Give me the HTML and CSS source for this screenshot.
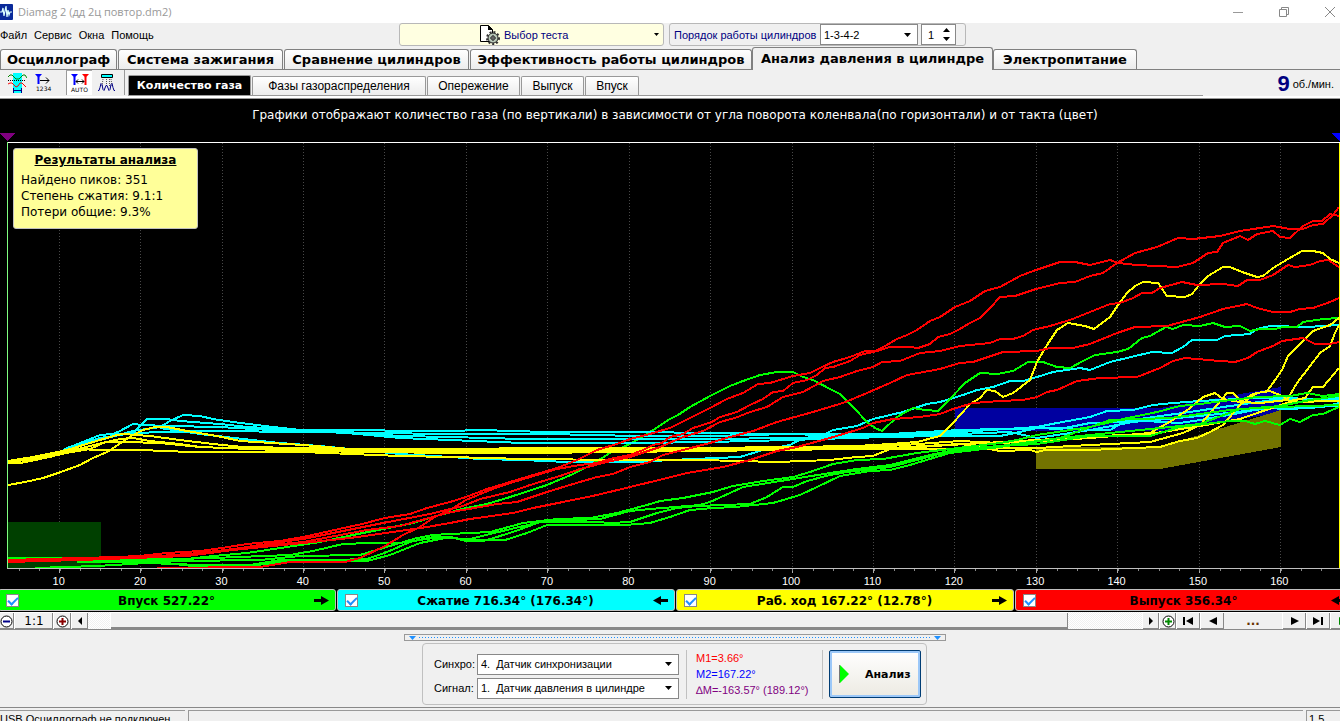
FILE: index.html
```html
<!DOCTYPE html>
<html lang="ru">
<head>
<meta charset="utf-8">
<title>Diamag 2 (дд 2ц повтор.dm2)</title>
<link rel="stylesheet" href="styles.css">
</head>
<body>
<header class="titlebar">
  <svg class="app-icon" width="13" height="16" viewBox="0 0 13 16"><rect x="-3" width="16" height="16" rx="1" fill="#0a2a9a"/><path d="M0 8h2l1-4 1 8 2-10 1 11 1-7 1 5 1-3h2" fill="none" stroke="#dff" stroke-width="1.2"/></svg>
  <span class="window-title">Diamag 2 (дд 2ц повтор.dm2)</span>
  <div class="window-buttons">
    <button aria-label="Свернуть"><svg width="12" height="12"><path d="M1 6.500h10" stroke="#999"/></svg></button>
    <button aria-label="Развернуть"><svg width="12" height="12" fill="none" stroke="#888"><path d="M1.500 3.500h7v7h-7zM3.500 3.500v-2h7v7h-2"/></svg></button>
    <button aria-label="Закрыть"><svg width="12" height="12"><path d="M1 1l10 10M11 1L1 11" stroke="#888"/></svg></button>
  </div>
</header>

<div class="menubar">
  <nav class="menu"><a href="#">Файл</a><a href="#">Сервис</a><a href="#">Окна</a><a href="#">Помощь</a></nav>
  <button class="test-picker">
    <svg width="22" height="22" viewBox="0 0 22 22"><path d="M1.500 1.500h8l4 4v12h-12z" fill="#fff" stroke="#000"/><path d="M9 1v5h5z"/><circle cx="14" cy="14" r="5" fill="#b8c8b8" stroke="#222" stroke-width="1"/><circle cx="14" cy="14" r="6" fill="none" stroke="#333" stroke-width="2" stroke-dasharray="2 2"/><circle cx="14" cy="14" r="2" fill="#fff" stroke="#333"/><path d="M14 11v6M11 14h6" stroke="#333"/></svg>
    <span>Выбор теста</span>
    <svg class="end" width="5" height="3"><path d="M0 0h5L2.500 3z"/></svg>
  </button>
  <div class="order-box">
    <label for="order">Порядок работы цилиндров</label>
    <span class="combo order-combo"><select id="order"><option>1-3-4-2</option></select><svg width="7" height="4"><path d="M0 0h7L3.500 4z"/></svg></span>
    <span class="spin"><input type="text" value="1" aria-label="Цилиндр"><svg width="7" height="13"><path d="M0 4h7L3.500 0zM0 9h7L3.500 13z"/></svg></span>
  </div>
</div>

<nav class="tabs">
  <button class="t1">Осциллограф</button><button class="t2">Система зажигания</button><button class="t3">Сравнение цилиндров</button><button class="t4">Эффективность работы цилиндров</button><button class="t5 active">Анализ давления в цилиндре</button><button class="t6">Электропитание</button>
</nav>

<div class="toolbar">
  <div class="tools">
    <button aria-label="Интервал"><svg width="20" height="20" viewBox="0 0 20 20"><path d="M6 0h9v20H6z" fill="#0ff"/><path d="M1 4l2-2h2l2 2 2 2h3l2-2 2-2h2l2 3" fill="none" stroke="#080"/><path d="M1 7.500h18" stroke="#000" stroke-dasharray="1 1"/><path d="M1 11l2-1h2l2 2 2 2 2-1 2-3h2l2 2 2 2" fill="none" stroke="red"/><path d="M7 17.500h7M6.500 15v5M14.500 15v5" stroke="#008"/></svg></button>
    <button aria-label="Нумерация"><svg width="20" height="20" viewBox="0 0 20 20"><path d="M1 1h7L4.500 5z" fill="#00f"/><path d="M4.500 4v7" stroke="#00f" stroke-width="2"/><path d="M6 7.500h9M12 4.500l3 3-3 3" fill="none" stroke="#000"/><text x="2" y="18" class="tiny">1234</text></svg></button>
    <button class="pressed" aria-label="Авто"><svg width="20" height="20" viewBox="0 0 20 20"><path d="M1 1h7L4.500 5z" fill="#00f"/><path d="M4.500 4v8" stroke="#00f" stroke-width="2"/><path d="M12 1h7l-3.500 4z" fill="red"/><path d="M15.500 4v8" stroke="red" stroke-width="2"/><path d="M6 8.500h8M8 6.500l-2 2 2 2M12 6.500l2 2-2 2" fill="none" stroke="#000"/><text x="1" y="19" class="tiny">AUTO</text></svg></button>
    <button aria-label="Пики"><svg width="20" height="20" viewBox="0 0 20 20"><path d="M4.500 1.500h11v3h-11z" fill="#0ff" stroke="#000"/><path d="M6 6l-1 7M9.500 6v7M12.500 6v7M14 6l1 7" stroke="#555" stroke-dasharray="1 1"/><path d="M1 17.500h1l1-3 1-4 1 1 1 5 1 1 2-5h1l2 5 1-1 1-5 1-1 1 4 1 3h1" fill="none" stroke="#008"/></svg></button>
  </div>
  <nav class="subtabs">
    <button class="s1 active">Количество газа</button><button class="s2">Фазы газораспределения</button><button class="s3">Опережение</button><button class="s4">Выпуск</button><button class="s5">Впуск</button>
  </nav>
  <div class="rpm"><b>9</b><span>об./мин.</span></div>
</div>

<main class="chart">
  <h1>Графики отображают количество газа (по вертикали) в зависимости от угла поворота коленвала(по горизонтали) и от такта (цвет)</h1>
  <div class="plot">
    <svg class="curves" viewBox="0 130 1340 445" preserveAspectRatio="none">
      <path d="M0 133h15l-8 8z" fill="#800080"/><path d="M1331 133h9v8z" fill="#00f"/>
      <path class="grid" d="M59.500 143v425M140.500 143v425M222.500 143v425M303.500 143v425M384.500 143v425M466.500 143v425M547.500 143v425M629.500 143v425M710.500 143v425M792.500 143v425M873.500 143v425M954.500 143v425M1036.500 143v425M1117.500 143v425M1199.500 143v425M1280.500 143v425"/>
      <path d="M8 522h93v46H8z" fill="#004000"/>
      <path d="M955 408h205l121-21v26l-121 18H955z" fill="#0000a0"/>
      <path d="M1036 447h124l121-37v37l-121 22h-124z" fill="#737300"/>
      <g class="c">
        <polyline points="160,428 200,434 243,439 280,443 320,446 400,454 450,457 480,459 523,460 567,462 637,462 670,460 717,458 740,457 763,450 790,445 803,438 822,436 833,430 857,426 873,419 903,412 927,404 940,402 963,395 977,390 993,387 1010,381 1023,381 1037,377 1053,372 1080,368 1090,370 1110,362 1152,352 1172,353 1183,347 1192,340 1217,340 1225,336 1250,334 1257,329 1270,326 1307,327 1339,325"/>
      </g>
      <g class="g">
        <polyline points="8,558 77,558 110,559 187,559 213,556 247,553 287,547 320,542 353,535 383,529 413,523 440,515 462,509 487,504 507,498 547,485 573,474 587,467 602,458 610,453 630,444 650,432 670,419 678,415 690,407 710,396 730,386 743,381 760,375 777,372 793,372 803,377 813,380 830,389 840,394 853,407 867,422 875,428 882,431 897,417 913,408 925,410 938,411 950,399 965,383 980,373 997,374 1013,371 1028,362 1043,362 1057,367 1070,368 1083,361 1095,355 1117,352 1128,349 1142,338 1150,336 1166,327 1173,329 1183,325 1200,326 1213,323 1225,327 1240,326 1250,331 1260,329 1275,329 1283,327 1297,327 1303,322 1323,319 1339,318"/>
      </g>
      <g class="c">
        <polyline points="66,449 100,438 133,433 147,419 167,419 180,421 220,424 247,427 287,429 347,433 400,438 450,440 523,443 637,443 710,442 790,440 850,438 890,437 940,436 1000,436 1020,432 1037,428 1060,429 1090,423 1120,422 1153,417 1190,412 1223,407 1273,400 1339,398"/>
        <polyline points="66,448 100,440 133,431 160,427 170,421 183,415 200,416 213,419 233,422 273,427 300,430 347,432 400,436 450,437 523,439 630,439 710,439 790,438 890,436 960,432 1037,427 1057,423 1090,417 1107,411 1133,410 1153,405 1173,403 1200,401 1257,398 1339,399"/>
        <polyline points="63,450 100,435 113,434 120,431 133,424 143,425 167,426 220,427 270,430 320,430 450,431 480,430 547,432 637,432 710,433 790,434 890,434 960,430 1000,429 1060,428 1090,430 1110,430 1127,420 1180,423 1200,420 1240,413 1263,408 1290,409 1323,407 1339,403"/>
        <polyline points="66,449 100,440 118,434 160,432 220,431 450,434 547,434 637,436 710,436 790,434 850,436 890,435 960,434 1010,432 1037,438 1090,430 1133,422 1200,416 1273,408 1339,406"/>
      </g>
      <g class="y">
        <polyline points="8,485 25,482 43,478 58,473 80,465 93,458 107,452 115,447 125,440 133,435 143,430 155,427 167,427 187,431 217,436 240,441 303,445 350,449 450,449 550,448 700,448 790,447 857,446 890,444 917,442 940,436 953,423 970,404 980,398 987,390 995,391 1003,397 1013,393 1030,380 1037,362 1047,345 1057,330 1068,323 1085,326 1094,329 1110,317 1118,305 1127,293 1135,286 1143,282 1158,283 1167,296 1185,297 1192,294 1200,284 1208,276 1223,267 1230,267 1242,272 1257,277 1263,276 1273,268 1288,259 1302,251 1313,251 1323,253 1330,259 1339,263"/>
        <polyline points="8,461 33,457 67,450 93,442 117,435 123,434 150,436 180,440 213,444 243,447 303,448 450,450 620,450 750,449 850,446 890,446 960,441 1000,443 1060,440 1090,438 1150,433 1173,420 1190,408 1203,397 1215,393 1223,399 1240,402 1253,394 1267,391 1273,383 1282,370 1288,356 1297,347 1313,331 1330,325 1339,318"/>
        <polyline points="8,462 33,459 67,452 90,446 107,442 120,439 133,438 150,441 180,444 200,447 250,449 350,450 450,452 620,451 790,448 890,448 960,444 995,448 1037,448 1090,445 1150,442 1183,433 1200,425 1217,405 1227,393 1233,393 1242,402 1260,403 1287,400 1297,383 1320,353 1330,346 1335,333 1339,325"/>
        <polyline points="8,463 20,463 40,459 66,453 90,449 105,442 125,442 160,443 200,447 303,451 450,453 530,453 700,451 850,449 990,449 1000,451 1030,450 1037,452 1045,450 1090,450 1133,448 1160,447 1180,441 1197,438 1210,432 1223,425 1240,405 1257,393 1270,391 1282,396 1290,401 1305,398 1313,387 1323,387 1339,368"/>
        <polyline points="8,462 50,457 77,449 100,450 140,450 190,452 303,452 400,456 450,457 525,459 620,460 700,460 777,462 830,460 857,457 873,456 890,449 950,445 1037,440 1100,436 1150,434 1200,426 1240,419 1260,412 1290,402 1339,401"/>
      </g>
      <g class="g">
        <polyline points="8,559 140,560 213,558 290,555 313,551 343,544 370,543 400,543 417,538 433,535 450,534 490,532 523,523 557,519 590,518 617,513 647,505 660,501 683,498 713,492 733,486 763,481 793,477 810,472 833,464 857,460 883,459 917,453 950,449 1000,443 1017,440 1037,435 1057,432 1090,427 1123,419 1157,412 1180,406 1200,404 1223,401 1257,397 1290,396 1307,393 1323,396 1339,394"/>
        <polyline points="8,560 180,561 260,560 300,556 360,555 400,543 433,538 450,537 466,540 490,534 515,528 545,521 575,520 600,519 630,511 650,509 700,505 710,502 730,493 743,487 793,479 830,473 857,469 890,465 930,455 960,449 1000,446 1037,444 1090,436 1150,436 1180,427 1230,421 1245,421 1255,424 1265,421 1280,425 1290,419 1300,422 1313,415 1323,414 1339,407"/>
        <polyline points="35,568 97,566 147,563 200,565 250,565 280,560 333,560 367,559 387,552 410,542 433,537 463,539 487,540 513,532 540,522 597,522 610,523 630,522 657,513 677,508 697,506 750,504 767,497 783,487 793,487 807,481 830,475 847,472 890,467 917,460 950,451 1000,446 1060,438 1110,433 1160,428 1200,424 1240,409 1280,407 1339,405"/>
        <polyline points="77,562 167,563 200,567 240,567 290,561 367,561 390,555 420,543 450,537 466,541 505,540 527,533 547,525 597,525 625,525 650,523 670,517 690,510 713,508 735,507 773,503 800,495 817,487 840,476 870,471 890,470 910,465 950,453 1000,447 1060,438 1110,420 1170,418 1230,410 1280,406 1310,400 1339,396"/>
      </g>
      <g class="r">
        <polyline points="8,560 117,557 140,556 167,553 200,551 222,548 247,544 280,541 303,537 330,531 362,524 385,518 410,514 427,508 450,502 466,497 487,489 510,482 530,476 557,468 577,460 597,450 617,444 630,439 650,434 670,428 690,418 710,408 727,399 743,393 758,384 770,383 793,376 810,373 820,368 833,362 850,357 865,351 875,351 885,346 897,339 907,335 917,330 930,321 940,317 955,307 970,301 985,291 1000,287 1020,276 1036,270 1060,262 1075,262 1090,265 1110,260 1118,263 1137,265 1177,267 1193,263 1208,253 1217,252 1223,243 1240,236 1248,240 1257,234 1273,231 1280,237 1290,238 1303,226 1313,221 1322,221 1330,214 1339,216"/>
        <polyline points="157,568 260,567 290,562 345,562 360,558 385,546 403,535 420,527 433,518 450,510 466,500 490,490 510,483 557,469 580,465 597,463 610,459 630,455 643,450 653,445 662,443 670,437 683,434 693,428 712,422 720,417 737,412 750,405 763,399 773,392 783,391 793,383 807,380 817,375 825,368 833,367 850,361 860,355 877,351 890,347 910,347 918,348 930,344 938,337 950,334 958,330 970,323 980,318 990,308 1000,297 1015,296 1036,289 1060,283 1075,282 1090,276 1103,273 1117,263 1135,253 1157,247 1178,238 1193,239 1220,236 1240,231 1273,226 1290,229 1303,229 1313,225 1323,224 1333,215 1339,207"/>
        <polyline points="8,560 117,558 180,556 222,551 253,546 303,539 333,533 383,523 430,514 463,506 480,499 510,492 530,485 560,476 580,469 607,462 630,457 660,447 683,437 703,431 720,422 735,418 750,412 767,407 783,397 803,392 823,381 840,377 857,371 873,367 882,362 900,361 920,353 940,351 960,346 990,343 1000,339 1013,339 1023,336 1033,330 1050,326 1070,320 1090,312 1110,304 1120,303 1133,298 1142,293 1152,293 1160,288 1182,282 1197,285 1223,284 1238,286 1247,280 1260,280 1273,275 1288,265 1295,267 1310,265 1320,261 1328,260 1339,267"/>
        <polyline points="8,561 133,558 200,553 250,547 303,542 367,530 400,526 447,513 463,510 497,504 517,502 547,492 573,484 597,477 613,474 630,467 650,462 663,455 683,450 710,443 730,437 753,431 777,422 813,412 843,403 867,393 890,383 907,375 940,369 960,363 973,362 1003,352 1037,351 1050,348 1073,348 1090,344 1117,333 1135,327 1167,326 1200,317 1223,309 1247,304 1257,308 1273,312 1290,312 1300,309 1313,308 1330,302 1339,298"/>
        <polyline points="8,562 80,560 187,556 233,550 303,543 350,538 400,531 427,527 450,523 470,519 513,513 533,508 563,502 597,495 630,487 663,479 687,473 723,467 750,460 777,451 797,447 830,438 863,428 873,423 893,419 920,417 940,414 953,409 973,403 1000,401 1023,400 1037,397 1047,392 1057,390 1077,381 1100,378 1137,377 1160,368 1173,361 1185,358 1220,361 1235,362 1248,358 1257,352 1273,346 1282,341 1303,338 1315,344 1330,344 1339,342"/>
      </g>
      <path class="frame" d="M7 142.500h1333"/>
      <path d="M7.500 142v427" stroke="#80ff80"/><path d="M1339.500 143v426" stroke="#ff0"/>
      <path d="M7 568.500h1333" stroke="#c0c0c0"/>
      <path d="M59.500 569v4M140.500 569v4M222.500 569v4M303.500 569v4M384.500 569v4M466.500 569v4M547.500 569v4M629.500 569v4M710.500 569v4M792.500 569v4M873.500 569v4M954.500 569v4M1036.500 569v4M1117.500 569v4M1199.500 569v4M1280.500 569v4" stroke="#aaa"/>
      <path d="M19 570h1321" stroke="#888" stroke-width="2" stroke-dasharray="1 19.350"/>
    </svg>
    <section class="results">
      <h2>Результаты анализа</h2>
      <p>Найдено пиков: 351</p><p>Степень сжатия: 9.1:1</p><p>Потери общие: 9.3%</p>
    </section>
  </div>
  <div class="axis"><span>10</span><span>20</span><span>30</span><span>40</span><span>50</span><span>60</span><span>70</span><span>80</span><span>90</span><span>100</span><span>110</span><span>120</span><span>130</span><span>140</span><span>150</span><span>160</span></div>
</main>

<div class="phases">
  <label class="intake"><input type="checkbox" checked><span>Впуск 527.22°</span><svg width="15" height="9"><path d="M0 3h7V0l8 4.500L7 9V6H0z"/></svg></label>
  <label class="compression"><input type="checkbox" checked><span>Сжатие 716.34° (176.34°)</span><svg width="15" height="9"><path d="M15 3H8V0L0 4.500 8 9V6h7z"/></svg></label>
  <label class="power"><input type="checkbox" checked><span>Раб. ход 167.22° (12.78°)</span><svg width="15" height="9"><path d="M0 3h7V0l8 4.500L7 9V6H0z"/></svg></label>
  <label class="exhaust"><input type="checkbox" checked><span>Выпуск 356.34°</span><svg width="15" height="9"><path d="M15 3H8V0L0 4.500 8 9V6h7z"/></svg></label>
</div>

<div class="scroller">
  <button class="zoom-out" aria-label="Уменьшить"><svg width="13" height="13"><circle cx="6.500" cy="6.500" r="5.500" fill="#fff" stroke="#000"/><path d="M3 6.500h7" stroke="#008" stroke-width="2"/></svg></button>
  <button class="scale">1:1</button>
  <button class="zoom-in" aria-label="Увеличить"><svg width="13" height="13"><circle cx="6.500" cy="6.500" r="5.500" fill="#fff" stroke="#000"/><path d="M3 6.500h7M6.500 3v7" stroke="#800" stroke-width="2"/></svg></button>
  <button class="step" aria-label="Влево"><svg width="4" height="8"><path d="M4 0v8L0 4z"/></svg></button>
  <div class="track"><div class="thumb"></div></div>
  <button class="step" aria-label="Вправо"><svg width="4" height="8"><path d="M0 0v8l4-4z"/></svg></button>
  <button class="add" aria-label="Добавить"><svg width="13" height="13"><circle cx="6.500" cy="6.500" r="5.500" fill="#fff" stroke="#000"/><path d="M3 6.500h7M6.500 3v7" stroke="#080" stroke-width="2"/></svg></button>
  <button class="nav" aria-label="В начало"><svg width="11" height="8"><path d="M0 0h2v8H0zM10 0v8L3 4z"/></svg></button>
  <button class="nav" aria-label="Назад"><svg width="8" height="8"><path d="M8 0v8L0 4z"/></svg></button>
  <button class="frame-no">...</button>
  <button class="nav" aria-label="Вперёд"><svg width="8" height="8"><path d="M0 0v8l8-4z"/></svg></button>
  <button class="nav" aria-label="В конец"><svg width="11" height="8"><path d="M8 0h2v8H8zM0 0v8l7-4z"/></svg></button>
  <button class="nav" aria-label="Пуск"><svg width="8" height="8"><path d="M0 0v8l8-4z" fill="#080"/></svg></button>
</div>

<section class="bottom">
  <div class="splitter"><svg width="7" height="4"><path d="M0 0h7L3.500 4z"/></svg><i></i><svg width="7" height="4"><path d="M0 0h7L3.500 4z"/></svg></div>
  <div class="panel">
    <div class="sources">
      <label for="sync">Синхро:</label><span class="combo"><select id="sync"><option>4.&nbsp; Датчик синхронизации</option></select><svg width="7" height="4"><path d="M0 0h7L3.500 4z"/></svg></span>
      <label for="signal">Сигнал:</label><span class="combo"><select id="signal"><option>1.&nbsp; Датчик давления в цилиндре</option></select><svg width="7" height="4"><path d="M0 0h7L3.500 4z"/></svg></span>
    </div>
    <div class="markers"><span class="m1">M1=3.66°</span><span class="m2">M2=167.22°</span><span class="dm">∆M=-163.57° (189.12°)</span></div>
    <button class="analyze"><svg width="10" height="20"><path d="M1 1v18l9-9z" fill="#0f0"/><path d="M.5 1v18" stroke="#777"/></svg><span>Анализ</span></button>
  </div>
</section>
<footer class="status"><span class="device">USB Осциллограф не подключен</span><span class="message"></span><span class="version">1.5</span></footer>
</body>
</html>
```
FILE: styles.css
```css
* { box-sizing: border-box; }
body {
  margin: 0;
  height: 100vh;
  min-height: 600px;
  display: flex;
  flex-direction: column;
  overflow: hidden;
  background: #f0f0f0;
  color: #000;
  font: 11px "Liberation Sans", sans-serif;
  white-space: nowrap;
}
button, select, input { font: inherit; color: inherit; margin: 0; padding: 0; border: 0; background: none; border-radius: 0; }
svg { display: block; flex: none; }
a { color: inherit; text-decoration: none; }

.titlebar { height: 23px; flex: none; display: flex; align-items: center; gap: 5px; background: #fff; color: #999; font: 11px "Open Sans", sans-serif; }
.window-buttons { display: flex; gap: 34px; margin-left: auto; padding-right: 4px; }
.window-buttons button { width: 12px; height: 16px; }

.menubar { height: 24px; flex: none; display: flex; align-items: flex-start; }
.menu { display: flex; gap: 7px; width: 399px; line-height: 25px; }
.test-picker { display: flex; align-items: center; gap: 3px; width: 265px; height: 23px; padding-left: 79px; border: 1px solid #b8b8b8; border-radius: 3px; background: #ffffe1; color: #000080; }
.test-picker .end { margin-left: auto; margin-right: 4px; fill: #000; }
.order-box { display: flex; align-items: center; height: 23px; width: 297px; margin-left: 5px; padding-left: 4px; border: 1px solid #b8b8b8; border-radius: 3px; color: #000080; }
.combo { display: grid; align-items: center; background: #fff; border: 1px solid #888; color: #000; }
.combo > * { grid-area: 1 / 1; }
.combo svg { justify-self: end; margin-right: 6px; pointer-events: none; }
.combo select { appearance: none; width: 100%; height: 100%; padding-left: 3px; }
.order-combo { width: 98px; height: 21px; margin-left: auto; }
.spin { display: flex; align-items: center; width: 35px; height: 21px; margin: 0 9px 0 3px; padding: 0 6px; background: #fff; border: 1px solid #888; color: #000; }
.spin input { width: 15px; }

.tabs { display: flex; align-items: flex-end; height: 23px; flex: none; gap: 1px; border-bottom: 1px solid #808080; font: bold 13px "DejaVu Sans", sans-serif; }
.tabs button { height: 20px; border: 1px solid #808080; border-bottom: 0; border-radius: 3px 3px 0 0; background: linear-gradient(#fff, #ececec); }
.tabs .active { height: 23px; margin: 0 -1px -1px; padding-bottom: 2px; background: #f0f0f0; }
.t1 { width: 117px; } .t2 { width: 165px; } .t3 { width: 185px; } .t4 { width: 282px; } .t5 { width: 241px; } .t6 { width: 144px; }

.toolbar { height: 29px; flex: none; display: flex; border-bottom: 1px solid #999; box-shadow: inset 0 -2px #fff; }
.tools { display: flex; align-items: center; height: 25px; width: 128px; padding-left: 5px; gap: 3px; }
.tools button { width: 24px; height: 25px; display: grid; place-items: center; }
.tools .pressed { width: 26px; background: #fff; margin-left: 7px; border-left: 1px solid #999; border-top: 1px solid #aaa; }
.tools button:last-child { width: 30px; padding-right: 6px; border-right: 1px solid #999; }
.tiny { font: 6px "DejaVu Sans", sans-serif; }
.subtabs { display: flex; align-items: flex-end; height: 26px; gap: 1px; width: 1075px; border-bottom: 1px solid #999; font-size: 12px; }
.subtabs button { height: 19px; border: 1px solid #999; border-bottom: 0; border-radius: 2px 2px 0 0; background: linear-gradient(#fff, #ececec); }
.subtabs .active { height: 20px; background: #000; color: #fff; font: bold 11px "DejaVu Sans", sans-serif; }
.s1 { width: 123px; } .s2 { width: 174px; } .s3 { width: 93px; } .s4 { width: 63px; } .s5 { width: 54px; }
.rpm { display: flex; align-items: center; gap: 3px; margin-left: auto; padding: 0 6px 1px 0; }
.rpm b { font-size: 22px; line-height: 22px; color: #000080; }

.chart { flex: 1; min-height: 0; display: flex; flex-direction: column; background: #000; color: #fff; }
.chart h1 { margin: 0; padding-left: 10px; height: 31px; flex: none; font: 12px/33px "DejaVu Sans", sans-serif; text-align: center; }
.plot { position: relative; flex: 1; min-height: 0; }
.curves { width: 100%; height: 100%; shape-rendering: crispEdges; }
.curves polyline { fill: none; stroke-width: 2; }
.grid { stroke: #484848; stroke-dasharray: 1 2; }
.frame { stroke: #fff; }
.r { stroke: #f00; } .g { stroke: #0f0; } .c { stroke: #0ff; } .y { stroke: #ff0; }
.results { position: absolute; left: 13px; top: 18px; width: 185px; height: 81px; padding: 3px 7px; border: 1px solid #c0c0c0; border-radius: 3px; background: #ff9; color: #000; font: 12px/16px "DejaVu Sans", sans-serif; }
.results h2 { margin: 0 0 3px; font: bold 12px/17px "DejaVu Sans", sans-serif; text-decoration: underline; text-align: center; }
.results p { margin: 0; }
.axis { display: grid; grid-template-columns: repeat(16, 1fr); height: 14px; flex: none; padding: 0 20px 0 18px; line-height: 12px; text-align: center; }

.phases { display: flex; height: 23px; flex: none; margin: 0 -14px 0 -2px; background: #000; padding-bottom: 1px; font: bold 12px "DejaVu Sans", sans-serif; }
.phases label { flex: 1; display: flex; align-items: center; justify-content: space-between; padding: 1px 6px 0 7px; border: 1px solid #c0c0c0; margin-right: 1px; border-radius: 3px; }
.phases input { appearance: none; width: 13px; height: 13px; background: #fff; border: 1px solid #888; display: grid; place-items: center; }
.phases input:checked::before { content: ""; width: 8px; height: 4px; margin-bottom: 2px; border: solid #1e90ff; border-width: 0 0 2px 2px; transform: rotate(-45deg); }
.intake { background: #0f0; } .compression { background: #0ff; } .power { background: #ff0; } .exhaust { background: #f00; }

.scroller { display: flex; height: 18px; flex: none; margin-right: -14px; border-bottom: 1px solid #888; }
.scroller button { display: grid; place-items: center; flex: none; border: solid #fff; border-width: 1px 0 0 1px; box-shadow: inset -1px -1px #888; }
.scroller .zoom-out { width: 14px; border-left: 0; padding-right: 3px; }
.scroller .scale { width: 39px; font: 12px "DejaVu Sans", sans-serif; }
.scroller .zoom-in { width: 18px; }
.step { width: 17px; }
.track { flex: 1; padding: 0 74px 0 22px; background: repeating-conic-gradient(#fff 0 25%, #f0f0f0 0 50%) 0 0 / 2px 2px; }
.thumb { height: 100%; background: #f0f0f0; border: solid #fff; border-width: 1px 0 0 1px; box-shadow: inset -1px -2px #888; }
.add { width: 17px; }
.nav { width: 24px; }
.scroller .frame-no { width: 58px; border-left: 0; box-shadow: none; color: #630; font: bold 12px "DejaVu Sans", sans-serif; }

.bottom { flex: none; height: 78px; padding-top: 4px; display: flex; flex-direction: column; align-items: center; gap: 2px; border-bottom: 1px solid #888; }
.splitter { display: flex; align-items: center; gap: 3px; width: 542px; height: 7px; flex: none; padding: 0 4px; margin-left: 10px; border: 1px solid #999; fill: #1e90ff; }
.splitter i { flex: 1; height: 1px; background: repeating-linear-gradient(90deg, #1e90ff 0 1px, transparent 1px 3px); }
.panel { display: flex; align-items: center; width: 505px; height: 62px; flex: none; margin-left: 9px; padding: 0 5px 0 11px; border: 1px solid #c0c0c0; border-radius: 4px; }
.sources { display: grid; grid-template-columns: 43px 202px; row-gap: 3px; align-items: center; padding-top: 4px; }
.sources .combo { height: 21px; }
.markers { display: flex; flex-direction: column; width: 137px; height: 49px; margin-left: 7px; padding-left: 9px; border: solid #c0c0c0; border-width: 0 1px; line-height: 16px; }
.m1 { color: #f00; } .m2 { color: #00f; } .dm { color: #800080; }
.analyze { display: flex; align-items: center; gap: 16px; width: 92px; height: 48px; margin-left: auto; padding-left: 9px; border: 1px solid #003c74; border-radius: 2px; background: linear-gradient(#fff, #eceae2); box-shadow: inset 0 0 0 2px #9cc8f8; font: bold 11px "DejaVu Sans", sans-serif; }

.status { display: flex; gap: 3px; height: 13px; flex: none; padding-top: 2px; overflow: hidden; line-height: 17px; }
.status span { border: solid #999; border-width: 1px 0 0 1px; }
.device { width: 185px; border-right: 1px solid #fff; }
.status .device { border-left: 0; }
.message { flex: 1; }
.version { width: 34px; padding-left: 2px; }
```
